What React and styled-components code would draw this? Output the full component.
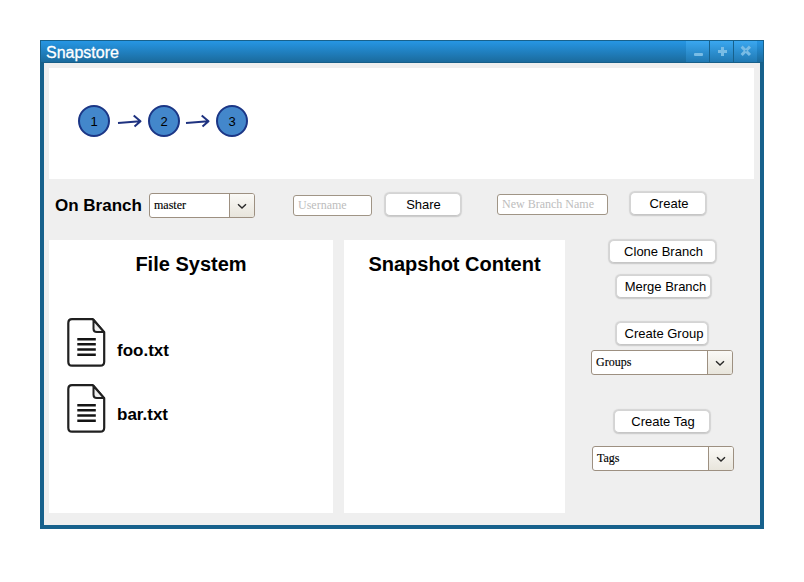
import React from "react";
import styled, { createGlobalStyle } from "styled-components";

const GlobalStyle = createGlobalStyle`
  * { box-sizing: border-box; }
  body { margin: 0; background: #fff; color: #000; font-family: "Liberation Sans", Arial, sans-serif; }
`;

const Page = styled.main`
  width: 804px;
  height: 582px;
  padding: 40px;
`;

const Window = styled.section`
  width: 724px;
  height: 489px;
  display: flex;
  flex-direction: column;
  border: 1px solid #17618c;
  background: #17618c;
`;

const TitleBar = styled.header`
  height: 22px;
  flex: none;
  display: flex;
  justify-content: space-between;
  padding: 0 6px 0 5px;
  background: linear-gradient(#2696e4, #1b6b9d);
  border-bottom: 1px solid #185f89;
`;

const Title = styled.div`
  font-size: 16px;
  line-height: 23px;
  color: #fff;
  -webkit-text-stroke: 0.3px #fff;
`;

const WindowActions = styled.div`
  display: flex;
  gap: 1px;
  background: #17618c;
`;

const WindowAction = styled.button`
  width: 23px;
  height: 21px;
  padding: 0;
  border: 0;
  display: block;
  background: linear-gradient(#3aa7f0, #2079b3);
  svg { display: block; }
`;

const Body = styled.div`
  flex: 1;
  margin: 0 3px 3px;
  padding: 5px;
  background: #efefef;
`;

const Graph = styled.div`
  width: 705px;
  height: 111px;
  padding: 37px 0 0 29px;
  display: flex;
  background: #fff;
`;

const Commit = styled.div`
  width: 32px;
  height: 32px;
  border: 2px solid #1b3686;
  border-radius: 50%;
  background: #4387cb;
  text-align: center;
  font-size: 13px;
  line-height: 29px;
`;

const Arrow = styled.svg`
  width: ${(p) => p.$width}px;
  height: 32px;
  display: block;
`;

const Toolbar = styled.div`
  height: 61px;
  display: flex;
  align-items: flex-start;
`;

const BranchLabel = styled.div`
  width: 94px;
  margin: 17px 0 0 6px;
  font-size: 17px;
  line-height: 20px;
  font-weight: bold;
  white-space: nowrap;
`;

const SelectBox = styled.div`
  width: ${(p) => p.$width}px;
  height: 25px;
  margin: ${(p) => p.$margin};
  flex: none;
  display: flex;
  border: 1px solid #9d9081;
  border-radius: 3px;
  overflow: hidden;
  background: #fff;
`;

const SelectText = styled.div`
  flex: 1;
  padding-left: 4px;
  font: 12px/23px "Liberation Serif", "Times New Roman", serif;
  -webkit-text-stroke: 0.15px #000;
`;

const SelectArrow = styled.div`
  width: 25px;
  border-left: 1px solid #9d9081;
  background: linear-gradient(#faf9f6, #e8e5dc);
  svg { display: block; }
`;

const Input = styled.input`
  width: ${(p) => p.$width}px;
  height: 21px;
  margin: ${(p) => p.$margin};
  padding: 0 4px 1px;
  border: 1px solid #a09586;
  border-radius: 3px;
  outline: 0;
  background: #fff;
  font: 12px "Liberation Serif", "Times New Roman", serif;
  &::placeholder { color: #bdbdbd; opacity: 1; }
`;

const Button = styled.button`
  width: ${(p) => p.$width}px;
  height: 23px;
  margin: ${(p) => p.$margin};
  padding: 1px 0 0 ${(p) => p.$shift || 1}px;
  flex: none;
  border: 1px solid #d4d4d4;
  border-bottom-color: #c6c6c6;
  border-radius: 5px;
  background: #fff;
  box-shadow: 0 1px 1px #cecece, 0 0 1px 0.5px #d4d4d4;
  color: #000;
  font: 13px/20px "Liberation Sans", Arial, sans-serif;
  white-space: nowrap;
`;

const Workspace = styled.div`
  display: grid;
  grid-template-columns: 284px 221px 1fr;
  column-gap: 11px;
`;

const Panel = styled.section`
  height: 273px;
  background: #fff;
`;

const Heading = styled.h2`
  margin: 0;
  padding-top: 12px;
  font-size: 20px;
  line-height: 24px;
  text-align: center;
  white-space: nowrap;
`;

const Files = styled.div`
  padding: 41px 0 0 17px;
`;

const FileRow = styled.div`
  display: flex;
  height: 66px;
  svg { display: block; flex: none; }
`;

const FileName = styled.div`
  padding: ${(p) => p.$top}px 0 0 10px;
  font-size: 17px;
  line-height: 20px;
  font-weight: bold;
`;

const Actions = styled.aside`
  display: flex;
  flex-direction: column;
  align-items: flex-start;
`;

function Dropdown({ width, margin, children }) {
  return (
    <SelectBox $width={width} $margin={margin}>
      <SelectText>{children}</SelectText>
      <SelectArrow>
        <svg width="24" height="23" viewBox="0 0 24 23">
          <path d="M8 10.2 12 14l4-3.8" fill="none" stroke="#292929" strokeWidth="1.4" />
        </svg>
      </SelectArrow>
    </SelectBox>
  );
}

function NextArrow({ width, start = 0 }) {
  return (
    <Arrow $width={width} viewBox={`${start} 0 ${width} 32`}>
      <path d="M8 18 30 16.3M23.7 10.6l6.8 5.7-6 5.2" fill="none" stroke="#1e3280" strokeWidth="2" strokeLinejoin="round" />
    </Arrow>
  );
}

function FileIcon() {
  return (
    <svg width="41" height="52" viewBox="0 0 41 52">
      <path d="M6 2.2h21l11.2 13v29.5q0 4-4 4H6q-3.7 0-3.7-4V6.2q0-4 3.7-4Z" fill="#fff" stroke="#202020" strokeWidth="2.2" strokeLinejoin="round" />
      <path d="M27.5 3v8.8q0 3.3 3.3 3.3h7.2Z" fill="#eee" stroke="#202020" strokeWidth="2" strokeLinejoin="round" />
      <path d="M11.3 22.2h18.5M11.3 27.2h18.5M11.3 32.5h18.5M11.3 37.7h18.5" stroke="#151515" strokeWidth="2.6" />
    </svg>
  );
}

export default function App() {
  return (
    <Page>
      <GlobalStyle />
      <Window>
        <TitleBar>
          <Title>Snapstore</Title>
          <WindowActions>
            <WindowAction aria-label="Minimize">
              <svg width="23" height="21"><rect x="8" y="12" width="9" height="3" rx="1" fill="#79bce5" /></svg>
            </WindowAction>
            <WindowAction aria-label="Maximize">
              <svg width="23" height="21"><path d="M8 10.5h9M12.5 6v9" stroke="#79bce5" strokeWidth="3" /></svg>
            </WindowAction>
            <WindowAction aria-label="Close">
              <svg width="23" height="21"><path d="m8.7 6.7 6.2 6.2m0-6.2-6.2 6.2" stroke="#79bce5" strokeWidth="3" strokeLinecap="square" /><path d="M11 9.8h2" stroke="#3594d1" /></svg>
            </WindowAction>
          </WindowActions>
        </TitleBar>
        <Body>
          <Graph>
            <Commit>1</Commit>
            <NextArrow width={38} />
            <Commit>2</Commit>
            <NextArrow width={36} start={2} />
            <Commit>3</Commit>
          </Graph>
          <Toolbar>
            <BranchLabel>On Branch</BranchLabel>
            <Dropdown width={106} margin="14px 38px 0 0">master</Dropdown>
            <Input $width={79} $margin="16px 13px 0 0" placeholder="Username" />
            <Button $width={76} $margin="14px 36px 0 0">Share</Button>
            <Input $width={111} $margin="15px 22px 0 0" placeholder="New Branch Name" />
            <Button $width={76} $margin="13px 0 0" $shift={2}>Create</Button>
          </Toolbar>
          <Workspace>
            <Panel>
              <Heading>File System</Heading>
              <Files>
                <FileRow><FileIcon /><FileName $top={24}>foo.txt</FileName></FileRow>
                <FileRow><FileIcon /><FileName $top={22}>bar.txt</FileName></FileRow>
              </Files>
            </Panel>
            <Panel><Heading>Snapshot Content</Heading></Panel>
            <Actions>
              <Button $width={107} $margin="0 0 12px 33px" $shift={2}>Clone Branch</Button>
              <Button $width={95} $margin="0 0 24px 40px" $shift={4}>Merge Branch</Button>
              <Button $width={92} $margin="0 0 5px 40px" $shift={4}>Create Group</Button>
              <Dropdown width={142} margin="0 0 35px 15px">Groups</Dropdown>
              <Button $width={96} $margin="0 0 13px 38px" $shift={2}>Create Tag</Button>
              <Dropdown width={142} margin="0 0 0 16px">Tags</Dropdown>
            </Actions>
          </Workspace>
        </Body>
      </Window>
    </Page>
  );
}
